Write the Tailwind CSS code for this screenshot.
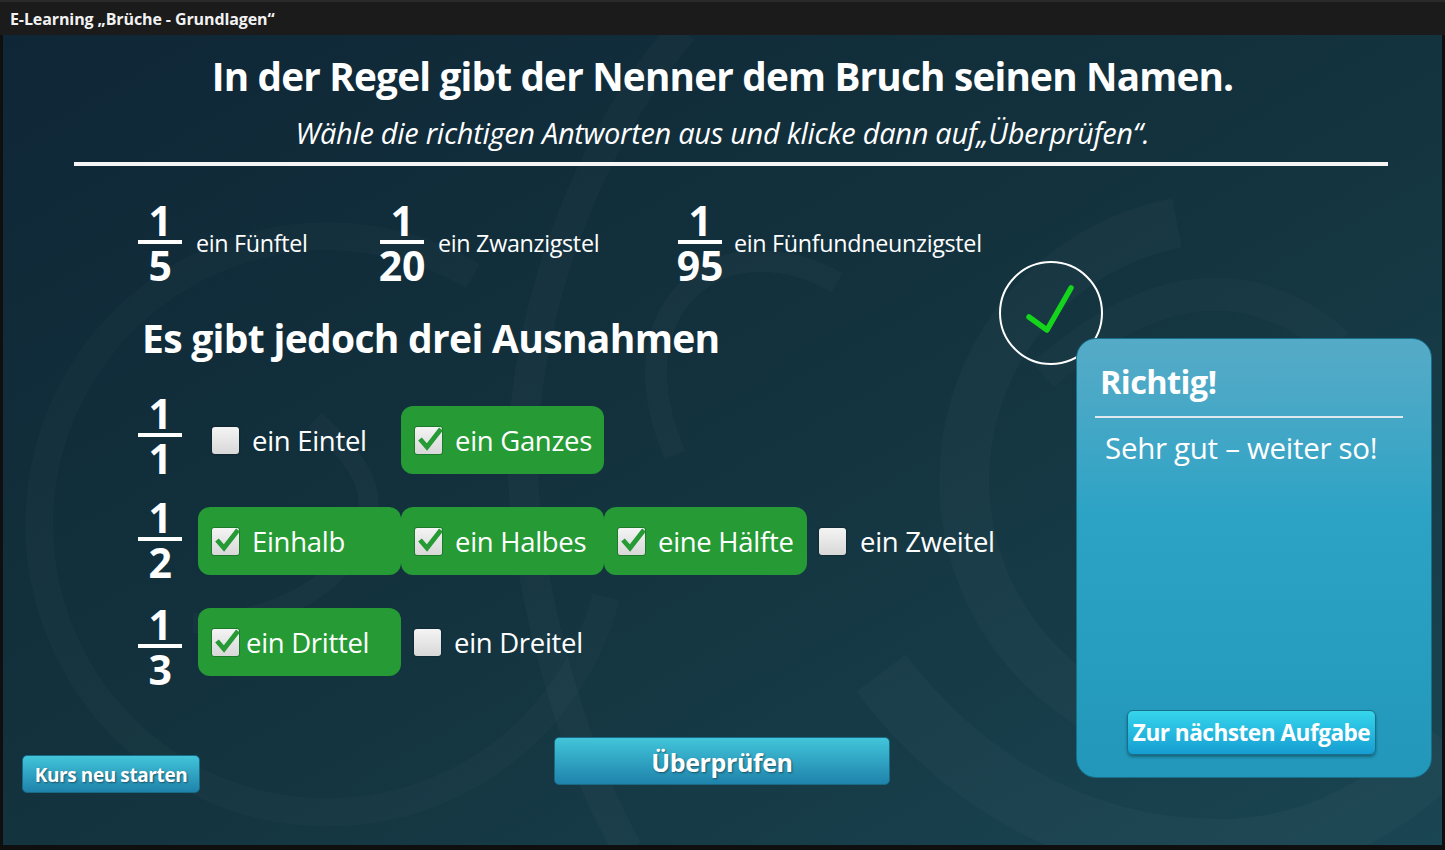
<!DOCTYPE html>
<html lang="de">
<head>
<meta charset="utf-8">
<title>E-Learning Brüche</title>
<script src="https://cdn.jsdelivr.net/npm/@tailwindcss/browser@4"></script>
</head>
<body class="m-0 bg-[#0f0f0f] font-['Open_Sans',sans-serif] text-white">
<div class="w-[1445px] h-[850px] overflow-hidden flex flex-col">
  <header class="h-[35px] shrink-0 bg-[#1b1b1b] border-t-2 border-[#2a2a2a] flex items-center pl-[10px] text-[16px] font-bold tracking-[-0.1px] text-[#f2f2f2]">E-Learning „Brüche - Grundlagen“</header>
  <main class="relative mx-[3px] w-[1439px] h-[810px] overflow-hidden bg-gradient-to-br from-[#0f2636] via-[#13333e] to-[#1a4552]">
    <svg class="absolute inset-0" width="1439" height="810" viewBox="0 0 1439 810" fill="none" stroke="#ffffff" stroke-opacity="0.025">
      <path d="M680 -5 C 590 100 530 250 520 400 C 515 520 560 700 625 815" stroke-width="30"/>
      <path d="M834 248 C 790 222 730 215 690 250 C 650 285 640 345 672 420" stroke-width="22"/>
      <path d="M1174 188 A 262 262 0 0 0 1210 707" stroke-width="50"/>
      <path d="M878 638 C 940 720 1050 815 1217 815 C 1310 815 1390 770 1445 710" stroke-width="62"/>
      <path d="M1040 340 Q 1204 195 1335 310" stroke-width="33" stroke-opacity="0.018"/>
      <path d="M312 385 C 350 420 372 450 364 480 C 355 545 270 590 190 588" stroke-width="20"/>
      <path d="M603 562 A 288 288 0 1 1 470 241" stroke-width="28" stroke-opacity="0.018"/>
    </svg>

    <div class="relative flex flex-col">
      <h1 class="mt-[14px] h-[54px] text-center text-[38.7px] leading-[54px] font-bold tracking-[-0.8px]">In der Regel gibt der Nenner dem Bruch seinen Namen.</h1>
      <p class="mt-[10px] h-[40px] text-center text-[29px] leading-[40px] italic tracking-[-0.3px]">Wähle die richtigen Antworten aus und klicke dann auf„Überprüfen“.</p>
      <div class="mt-[9px] ml-[71px] w-[1314px] h-[4px] bg-[#f5f5f5]"></div>

      <div class="mt-[35px] ml-[135px] flex items-center h-[84px] text-[23.3px] tracking-[-0.3px]">
        <div class="w-[44px] flex flex-col items-center text-[41px] font-bold"><span class="h-[40px] leading-[40px]">1</span><span class="w-[44px] h-[4px] bg-white"></span><span class="h-[42px] leading-[42px]">5</span></div>
        <span class="ml-[14px] w-[184px]">ein Fünftel</span>
        <div class="w-[44px] flex flex-col items-center text-[41px] font-bold"><span class="h-[40px] leading-[40px]">1</span><span class="w-[44px] h-[4px] bg-white"></span><span class="h-[42px] leading-[42px]">20</span></div>
        <span class="ml-[14px] w-[240px]">ein Zwanzigstel</span>
        <div class="w-[44px] flex flex-col items-center text-[41px] font-bold"><span class="h-[40px] leading-[40px]">1</span><span class="w-[44px] h-[4px] bg-white"></span><span class="h-[42px] leading-[42px]">95</span></div>
        <span class="ml-[12px]">ein Fünfundneunzigstel</span>
      </div>

      <h2 class="mt-[28px] ml-[139px] h-[50px] text-[39px] leading-[50px] font-bold tracking-[-0.7px]">Es gibt jedoch drei Ausnahmen</h2>

      <div class="mt-[43px] ml-[135px] flex flex-col gap-[33px] text-[27.5px] tracking-[-0.3px]">
        <div class="flex items-center h-[68px]">
          <div class="w-[44px] -mt-[8px] flex flex-col items-center text-[41px] font-bold"><span class="h-[40px] leading-[40px]">1</span><span class="w-[44px] h-[4px] bg-white"></span><span class="h-[42px] leading-[42px]">1</span></div>
          <div class="ml-[16px] w-[203px] h-[68px] flex items-center pl-[14px]"><span class="w-[27px] h-[27px] rounded-[3px] shadow-[0_0_2px_rgba(0,0,0,0.6)] bg-gradient-to-b from-[#f4f4f4] to-[#d8d8d8]"></span><span class="ml-[13px] mt-[2px]">ein Eintel</span></div>
          <div class="w-[203px] h-[68px] rounded-[12px] bg-[#259a35] flex items-center pl-[13px]">
            <span class="w-[29px] h-[29px] rounded-[3px] border border-[#1d7a2a] bg-gradient-to-b from-[#f4f4f4] to-[#d8d8d8]"><svg class="overflow-visible" width="27" height="27" viewBox="0 0 27 27" fill="none" stroke="#259a35" stroke-width="4.8"><path d="M5 12 L12 20 L26 2"/></svg></span><span class="ml-[12px] mt-[2px]">ein Ganzes</span>
          </div>
        </div>
        <div class="flex items-center h-[68px]">
          <div class="w-[44px] -mt-[2px] flex flex-col items-center text-[41px] font-bold"><span class="h-[40px] leading-[40px]">1</span><span class="w-[44px] h-[4px] bg-white"></span><span class="h-[42px] leading-[42px]">2</span></div>
          <div class="ml-[16px] w-[203px] h-[68px] rounded-[12px] bg-[#259a35] flex items-center pl-[13px]">
            <span class="w-[29px] h-[29px] rounded-[3px] border border-[#1d7a2a] bg-gradient-to-b from-[#f4f4f4] to-[#d8d8d8]"><svg class="overflow-visible" width="27" height="27" viewBox="0 0 27 27" fill="none" stroke="#259a35" stroke-width="4.8"><path d="M5 12 L12 20 L26 2"/></svg></span><span class="ml-[12px] mt-[2px]">Einhalb</span>
          </div>
          <div class="w-[203px] h-[68px] rounded-[12px] bg-[#259a35] flex items-center pl-[13px]">
            <span class="w-[29px] h-[29px] rounded-[3px] border border-[#1d7a2a] bg-gradient-to-b from-[#f4f4f4] to-[#d8d8d8]"><svg class="overflow-visible" width="27" height="27" viewBox="0 0 27 27" fill="none" stroke="#259a35" stroke-width="4.8"><path d="M5 12 L12 20 L26 2"/></svg></span><span class="ml-[12px] mt-[2px]">ein Halbes</span>
          </div>
          <div class="w-[203px] h-[68px] rounded-[12px] bg-[#259a35] flex items-center pl-[13px]">
            <span class="w-[29px] h-[29px] rounded-[3px] border border-[#1d7a2a] bg-gradient-to-b from-[#f4f4f4] to-[#d8d8d8]"><svg class="overflow-visible" width="27" height="27" viewBox="0 0 27 27" fill="none" stroke="#259a35" stroke-width="4.8"><path d="M5 12 L12 20 L26 2"/></svg></span><span class="ml-[12px] mt-[2px]">eine Hälfte</span>
          </div>
          <div class="w-[203px] h-[68px] flex items-center pl-[12px]"><span class="w-[27px] h-[27px] rounded-[3px] shadow-[0_0_2px_rgba(0,0,0,0.6)] bg-gradient-to-b from-[#f4f4f4] to-[#d8d8d8]"></span><span class="ml-[14px] mt-[2px]">ein Zweitel</span></div>
        </div>
        <div class="flex items-center h-[68px]">
          <div class="w-[44px] mt-[9px] flex flex-col items-center text-[41px] font-bold"><span class="h-[40px] leading-[40px]">1</span><span class="w-[44px] h-[4px] bg-white"></span><span class="h-[42px] leading-[42px]">3</span></div>
          <div class="ml-[16px] w-[203px] h-[68px] rounded-[12px] bg-[#259a35] flex items-center pl-[13px]">
            <span class="w-[29px] h-[29px] rounded-[3px] border border-[#1d7a2a] bg-gradient-to-b from-[#f4f4f4] to-[#d8d8d8]"><svg class="overflow-visible" width="27" height="27" viewBox="0 0 27 27" fill="none" stroke="#259a35" stroke-width="4.8"><path d="M5 12 L12 20 L26 2"/></svg></span><span class="ml-[6px] mt-[2px]">ein Drittel</span>
          </div>
          <div class="w-[203px] h-[68px] flex items-center pl-[13px]"><span class="w-[27px] h-[27px] rounded-[3px] shadow-[0_0_2px_rgba(0,0,0,0.6)] bg-gradient-to-b from-[#f4f4f4] to-[#d8d8d8]"></span><span class="ml-[13px] mt-[2px]">ein Dreitel</span></div>
        </div>
      </div>

      <div class="mt-[61px] flex items-start">
        <button class="mt-[18px] ml-[19px] w-[178px] h-[38px] pt-[2px] rounded-[5px] border border-[#1a6a85] bg-gradient-to-b from-[#42c5da] to-[#1f83ab] text-[19px] font-bold tracking-[-0.4px] [text-shadow:1px_1px_2px_rgba(0,0,0,0.45)]">Kurs neu starten</button>
        <button class="ml-[354px] w-[336px] h-[48px] pt-[3px] rounded-[5px] border border-[#1a6a85] bg-gradient-to-b from-[#42c5da] to-[#1f83ab] text-[25px] font-bold tracking-[-0.4px] [text-shadow:1px_1px_2px_rgba(0,0,0,0.45)]">Überprüfen</button>
      </div>
    </div>

    <svg class="absolute left-[994px] top-[224px]" width="108" height="108" viewBox="0 0 108 108" fill="none">
      <circle cx="54" cy="54" r="51" stroke="#ffffff" stroke-width="2"/>
      <path d="M32 58 L50 71 L74 29" stroke="#14d51c" stroke-width="5.5" stroke-linecap="round" stroke-linejoin="round"/>
    </svg>

    <aside class="absolute left-[1073px] top-[303px] w-[356px] h-[440px] rounded-[20px] border border-[#176f8a] bg-gradient-to-b from-[#55abc7] via-[#2ca3c5] via-40% to-[#2297ba] flex flex-col">
      <h3 class="mt-[20px] ml-[23px] h-[46px] text-[32.5px] leading-[46px] font-bold tracking-[-0.6px]">Richtig!</h3>
      <div class="mt-[11px] ml-[18px] w-[308px] h-[2px] bg-[#dfe8ec]"></div>
      <p class="mt-[10px] ml-[28px] h-[40px] text-[29.5px] leading-[40px] tracking-[-0.3px]">Sehr gut – weiter so!</p>
      <button class="mt-auto mb-[22px] ml-[50px] w-[249px] h-[45px] rounded-[6px] border border-[#176f8a] bg-gradient-to-b from-[#36d6ec] to-[#169dd2] text-[22.6px] font-bold tracking-[-0.5px] shadow-[0_2px_3px_rgba(0,0,0,0.35)]">Zur nächsten Aufgabe</button>
    </aside>
  </main>
</div>
</body>
</html>
